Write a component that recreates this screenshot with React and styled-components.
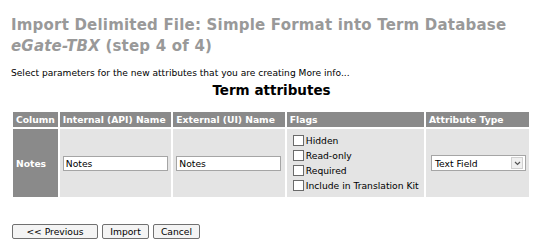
import React from "react";
import styled, { createGlobalStyle } from "styled-components";

const GlobalStyle = createGlobalStyle`
  html, body {
    margin: 0;
    padding: 0;
    background: #ffffff;
  }
  body {
    font-family: "DejaVu Sans", Verdana, sans-serif;
    color: #000;
  }
`;

const Page = styled.div`
  width: 544px;
  height: 249px;
  padding: 15px 12px 0 11px;
  box-sizing: border-box;
  overflow: hidden;
`;

const Title = styled.h1`
  margin: 0;
  font-size: 15px;
  line-height: 21px;
  font-weight: bold;
  color: #999999;
  letter-spacing: 0.2px;
`;

const Product = styled.em`
  font-style: italic;
`;

const Intro = styled.p`
  margin: 10px 0 0 0;
  font-size: 9.1px;
  line-height: 12px;
`;

const Heading = styled.h2`
  margin: 2px 0 0 0;
  text-align: center;
  font-size: 13.5px;
  line-height: 18px;
  font-weight: bold;
`;

const Table = styled.table`
  margin: 11px 0 0 0;
  width: 520px;
  border-collapse: separate;
  border-spacing: 2px;
  font-size: 9.2px;
`;

const HeadCell = styled.th`
  background: #8a8a8a;
  color: #ffffff;
  font-weight: bold;
  text-align: left;
  padding: 2px 3px;
  height: 11px;
  line-height: 11px;
  white-space: nowrap;
  width: ${(p) => p.$w || "auto"};
`;

const Cell = styled.td`
  background: ${(p) => (p.$dark ? "#8a8a8a" : "#e4e4e4")};
  color: ${(p) => (p.$dark ? "#ffffff" : "#000")};
  font-weight: ${(p) => (p.$dark ? "bold" : "normal")};
  padding: 2px 3px;
  height: 64px;
  vertical-align: middle;
`;

const TextInput = styled.input`
  box-sizing: border-box;
  width: 105px;
  height: 15px;
  padding: 0 2px;
  border: 1px solid #a5a5a5;
  font-family: "DejaVu Sans", Verdana, sans-serif;
  font-size: 9.2px;
  background: #fff;
`;

const FlagList = styled.div`
  display: flex;
  flex-direction: column;
  gap: 2px;
  padding-left: 3px;
`;

const Flag = styled.label`
  display: flex;
  align-items: center;
  gap: 2px;
  height: 13px;
  white-space: nowrap;
`;

const Box = styled.span`
  width: 9px;
  height: 9px;
  border: 1px solid #6a6a6a;
  background: #fff;
  display: inline-block;
`;

const SelectBox = styled.div`
  box-sizing: border-box;
  width: 95px;
  height: 16px;
  border: 1px solid #a5a5a5;
  background: #fff;
  display: flex;
  align-items: center;
  justify-content: space-between;
  padding: 0 2px 0 3px;
  margin-left: 2px;
`;

const Arrow = styled.span`
  width: 12px;
  height: 12px;
  background: #f0f0f0;
  border: 1px solid #d0d0d0;
  box-sizing: border-box;
  display: flex;
  align-items: center;
  justify-content: center;
`;

const Buttons = styled.div`
  margin-top: 25px;
  display: flex;
  gap: 4px;
  padding-left: 1px;
`;

const Button = styled.button`
  box-sizing: border-box;
  height: 15px;
  width: ${(p) => p.$w};
  padding: 0;
  font-family: "DejaVu Sans", Verdana, sans-serif;
  font-size: 9.2px;
  line-height: 12px;
  background: #f4f4f4;
  border: 1px solid #707070;
  border-radius: 2px;
  color: #000;
`;

const flags = ["Hidden", "Read-only", "Required", "Include in Translation Kit"];

export default function App() {
  return (
    <>
      <GlobalStyle />
      <Page>
        <Title>
          Import Delimited File: Simple Format into Term Database
          <br />
          <Product>eGate-TBX</Product> (step 4 of 4)
        </Title>
        <Intro>
          Select parameters for the new attributes that you are creating More info...
        </Intro>
        <Heading>Term attributes</Heading>
        <Table>
          <thead>
            <tr>
              <HeadCell $w="37px">Column</HeadCell>
              <HeadCell $w="106px">Internal (API) Name</HeadCell>
              <HeadCell $w="106px">External (UI) Name</HeadCell>
              <HeadCell $w="134px">Flags</HeadCell>
              <HeadCell>Attribute Type</HeadCell>
            </tr>
          </thead>
          <tbody>
            <tr>
              <Cell $dark>Notes</Cell>
              <Cell>
                <TextInput defaultValue="Notes" />
              </Cell>
              <Cell>
                <TextInput defaultValue="Notes" />
              </Cell>
              <Cell>
                <FlagList>
                  {flags.map((f) => (
                    <Flag key={f}>
                      <Box />
                      {f}
                    </Flag>
                  ))}
                </FlagList>
              </Cell>
              <Cell>
                <SelectBox>
                  Text Field
                  <Arrow>
                    <svg width="7" height="5" viewBox="0 0 7 5">
                      <path d="M1 1 L3.5 3.5 L6 1" fill="none" stroke="#555" strokeWidth="1.2" />
                    </svg>
                  </Arrow>
                </SelectBox>
              </Cell>
            </tr>
          </tbody>
        </Table>
        <Buttons>
          <Button $w="86px">&lt;&lt; Previous</Button>
          <Button $w="47px">Import</Button>
          <Button $w="47px">Cancel</Button>
        </Buttons>
      </Page>
    </>
  );
}
